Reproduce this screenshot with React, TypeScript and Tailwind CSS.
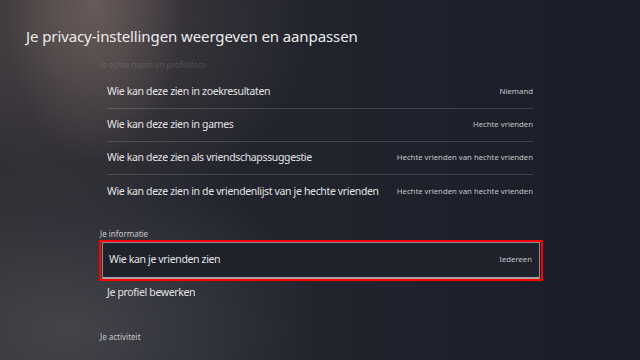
const rows = [
  { label: 'Wie kan deze zien in zoekresultaten', value: 'Niemand' },
  { label: 'Wie kan deze zien in games', value: 'Hechte vrienden' },
  { label: 'Wie kan deze zien als vriendschapssuggestie', value: 'Hechte vrienden van hechte vrienden' },
  { label: 'Wie kan deze zien in de vriendenlijst van je hechte vrienden', value: 'Hechte vrienden van hechte vrienden' },
];

export default function App() {
  return (
    <div className="relative w-[640px] h-[360px] overflow-hidden flex flex-col font-['Noto_Sans',_'Liberation_Sans',_sans-serif] bg-[radial-gradient(ellipse_90px_160px_at_95px_0px,rgba(135,115,108,0.55),transparent),radial-gradient(ellipse_260px_200px_at_60px_20px,rgba(110,95,92,0.45),transparent),radial-gradient(ellipse_260px_170px_at_70px_330px,rgba(95,95,100,0.5),transparent),linear-gradient(90deg,#2a2a31_0%,#22242d_40%,#1a1d29_100%)]">
      <h1 className="mt-[25px] ml-[26px] text-[15px] leading-[22px] text-[#ececec] font-normal tracking-[-0.1px] whitespace-nowrap">
        Je privacy-instellingen weergeven en aanpassen
      </h1>

      <div className="mt-[11px] ml-[100px] h-[14px] text-[8px] leading-[14px] text-white/15 overflow-hidden">
        Je echte naam en profielfoto
      </div>

      <div className="mt-[4px] ml-[107px] w-[426px] flex flex-col">
        {rows.map((r, i) => (
          <div
            key={i}
            className={`h-[33px] flex items-center justify-between whitespace-nowrap ${i < rows.length - 1 ? 'border-b border-white/15' : ''}`}
          >
            <span className="text-[10.5px] tracking-[-0.35px] text-[#e2e2e4]">{r.label}</span>
            <span className="text-[7.75px] text-[#c4c4c8]">{r.value}</span>
          </div>
        ))}
      </div>

      <div className="mt-[20px] ml-[100px] h-[12px] text-[8px] leading-[12px] text-[#c8c8cc]">Je informatie</div>

      <div className="ml-[99px] w-[444px] h-[41px] border-2 border-[#ff0000]">
        <div className="h-full mx-[1px] border border-[#8f8c95] border-b-2 border-b-[#a9a2a0] bg-[#1f212b] flex items-center justify-between pl-[6px] pr-[7px] whitespace-nowrap">
          <span className="text-[10.5px] tracking-[-0.35px] text-[#e6e6e8]">Wie kan je vrienden zien</span>
          <span className="text-[7.75px] text-[#c4c4c8]">Iedereen</span>
        </div>
      </div>

      <div className="ml-[107px] h-[24px] flex items-center text-[10.5px] tracking-[-0.35px] text-[#e2e2e4]">Je profiel bewerken</div>

      <div className="mt-[26px] ml-[100px] h-[12px] text-[8px] leading-[12px] text-[#c8c8cc]">Je activiteit</div>
    </div>
  );
}
